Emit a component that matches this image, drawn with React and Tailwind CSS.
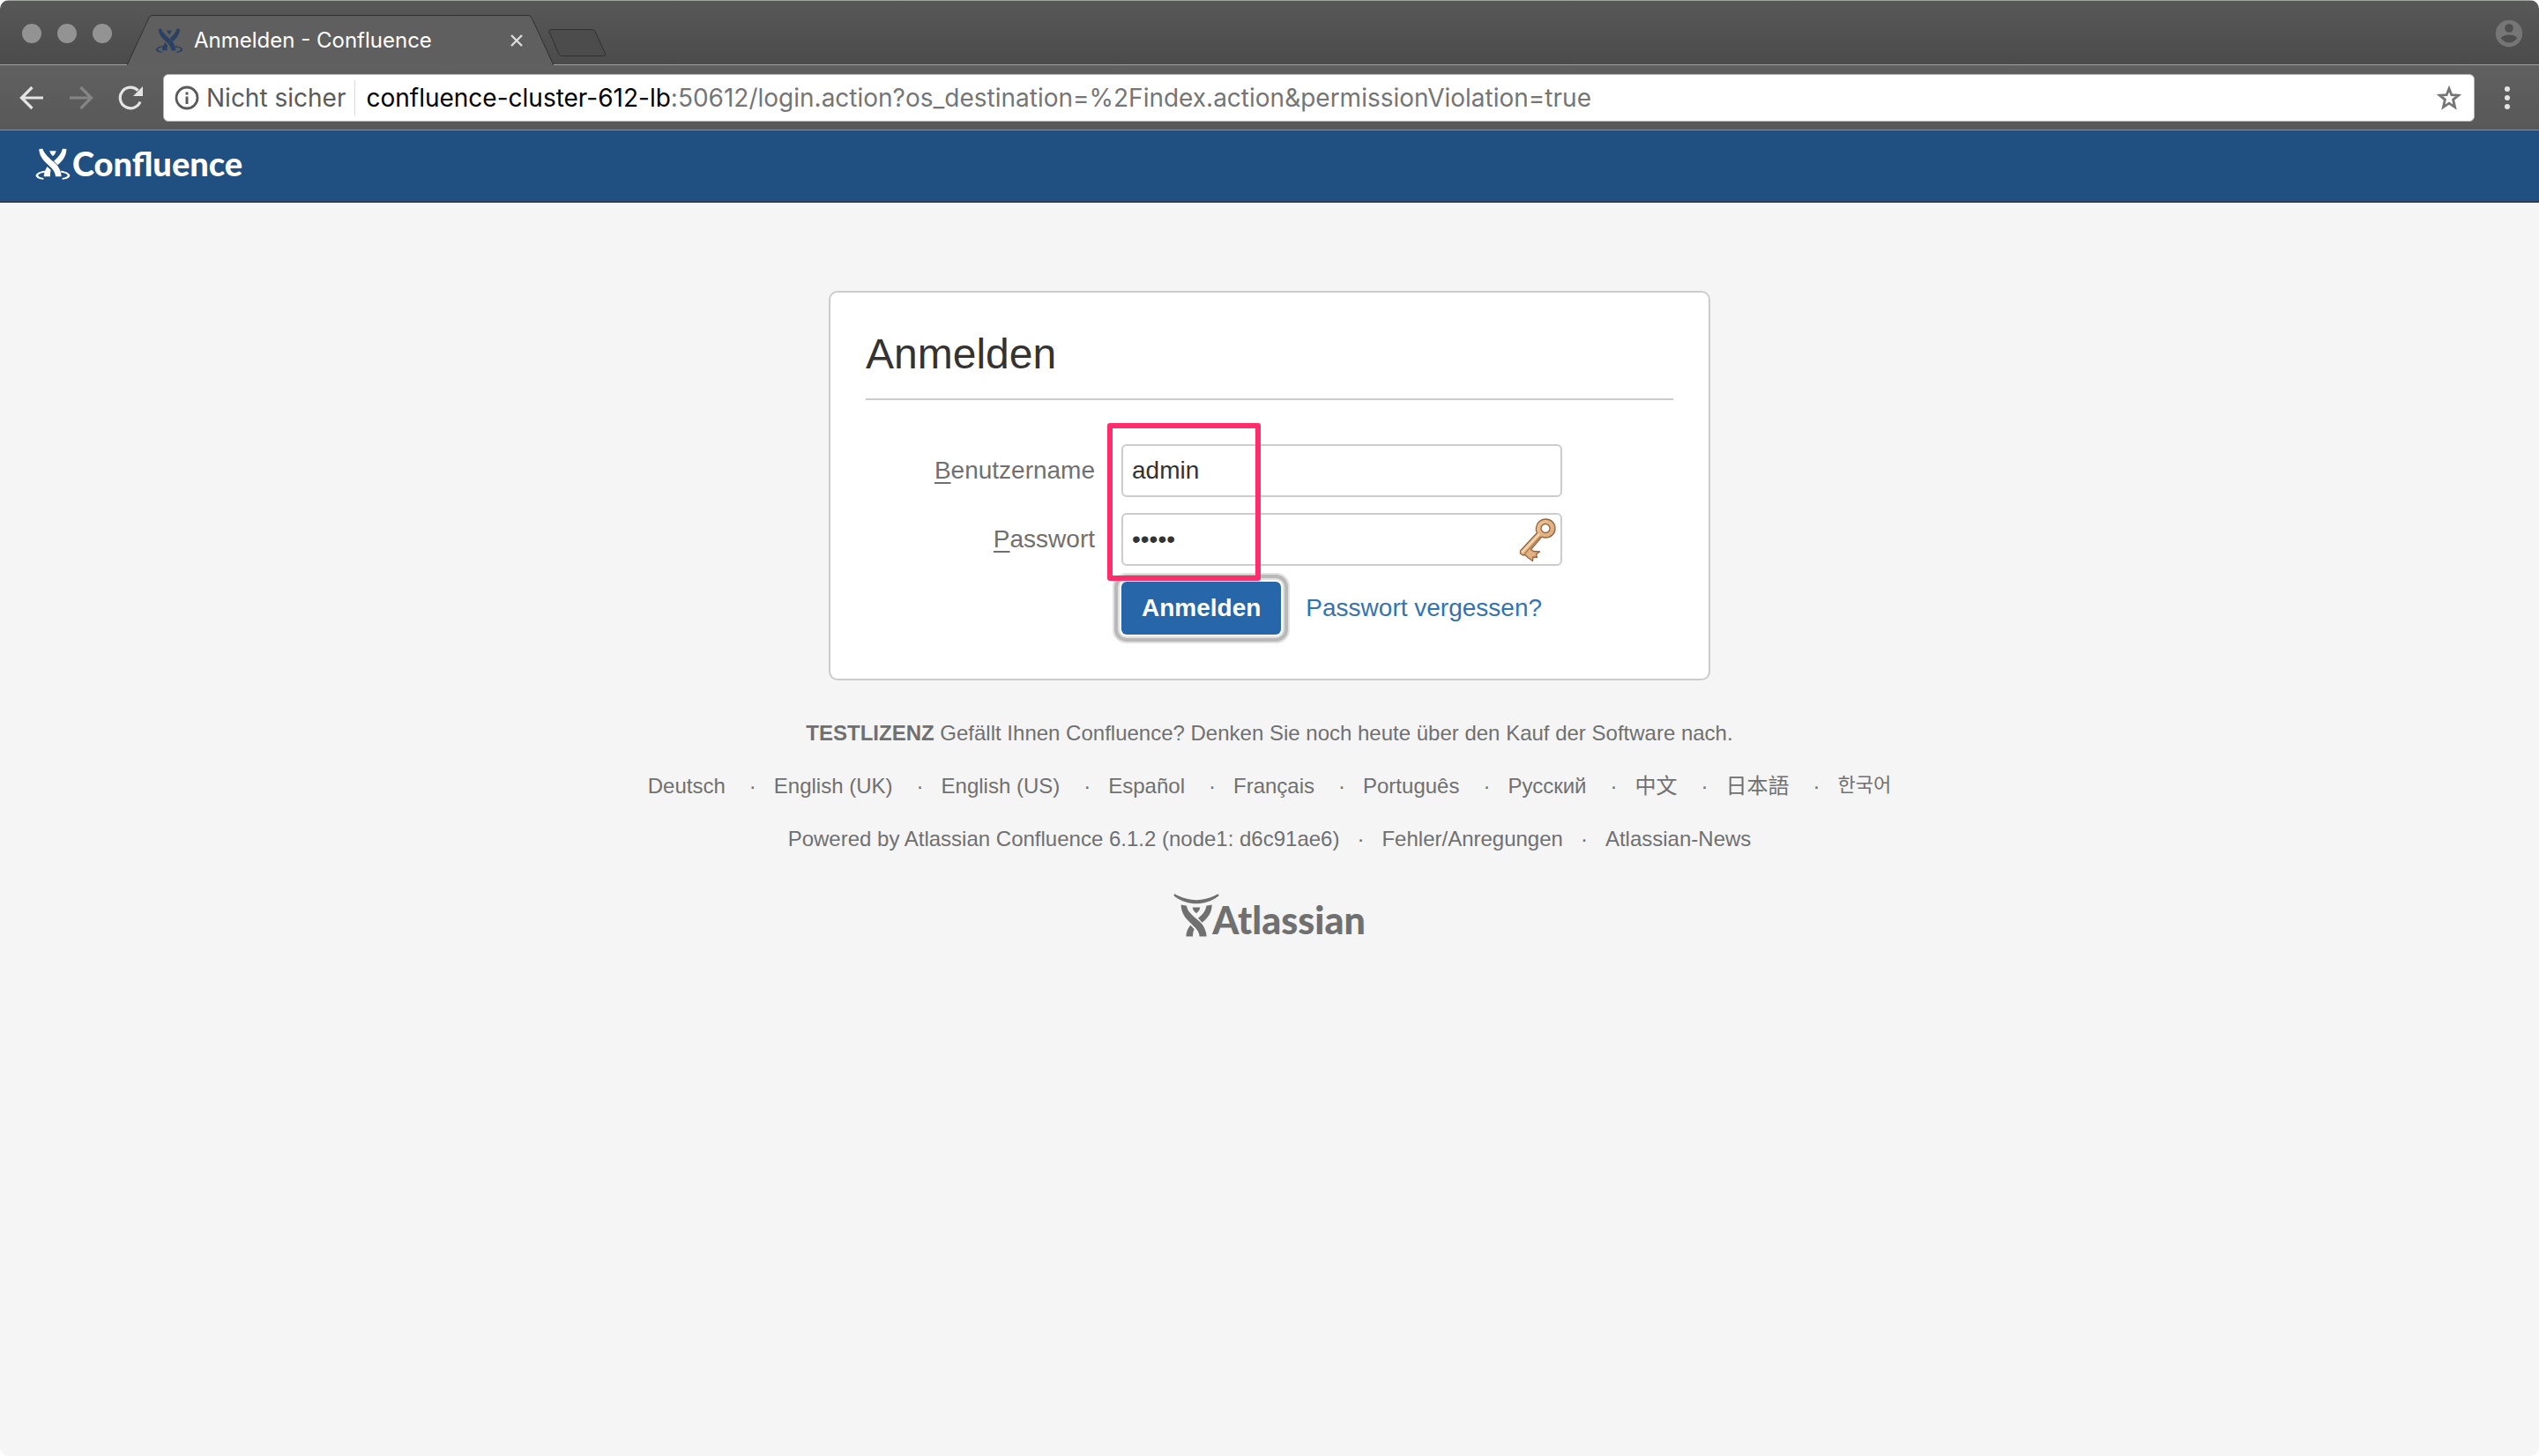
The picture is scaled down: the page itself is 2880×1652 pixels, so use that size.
import React from "react";

function CharlieFigure({ className }) {
  return (
    <svg viewBox="60 54 120 108" className={className} fill="currentColor" aria-hidden="true">
      <path d="M73 57L85 56C92 76 108 88 126 104C142 118 148 134 149 151H129C128 140 124 132 116 123L104 111C86 95 73 80 73 57Z" />
      <path d="M166 57L153 56C148 74 137 86 123 98L136 112C156 95 166 79 166 57Z" />
      <path d="M109 64H131C129 72 125 78 120 81C115 78 111 72 109 64Z" />
      <path d="M101 117L113 129C111 136 111 143 111 151H89C90 138 94 126 101 117Z" />
      <path d="M94 131C72 133 60 142 62 149C64 156 76 160 88 161V156C78 155 70 151 70 147C70 142 80 138 92 137Z" />
      <path d="M146 131C168 133 180 142 178 149C176 156 164 160 152 161V156C162 155 170 151 170 147C170 142 160 138 148 137Z" />
    </svg>
  );
}

function AtlassianFigure({ className }) {
  return (
    <svg viewBox="88 70 156 146" className={className} fill="currentColor" aria-hidden="true">
      <path d="M90 72C92 70 96 71 98 73C140 97 192 97 234 73C236 71 240 70 242 72C243 75 242 78 239 79C195 111 137 111 93 79C90 78 89 75 90 72Z" />
      <path d="M114 107L133 111C136 130 150 142 174 162C191 176 199 194 201 215H177C175 201 170 192 158 181L144 167C126 150 114 132 114 107Z" />
      <path d="M219 107L200 111C198 128 188 140 172 153L186 168C208 149 219 132 219 107Z" />
      <path d="M153 116H179C178 124 173 131 166 136C159 131 154 124 153 116Z" />
      <path d="M146 177L159 190C155 198 154 206 154 215H131C132 200 137 188 146 177Z" />
    </svg>
  );
}

function KeyIcon() {
  return (
    <svg viewBox="0 0 44 52" className="pointer-events-none absolute right-1.5 top-1 h-[52px] w-[44px]" aria-hidden="true">
      <defs>
        <linearGradient id="brass" x1="0" y1="0" x2="1" y2="1">
          <stop offset="0" stopColor="#f3d0a0" />
          <stop offset="1" stopColor="#d59a68" />
        </linearGradient>
      </defs>
      <path
        fill="url(#brass)"
        stroke="#946442"
        strokeWidth="1.300"
        strokeLinejoin="round"
        fillRule="evenodd"
        d="M31 3C37.500 3 42 7.500 42 13.500C42 19.500 37.500 24 31 24C29.500 24 28 23.700 26.800 23.200L14.500 37.500L17.500 39.500L24.500 40L20.500 43L21.500 46.500L17 46L16.500 50.500L11 46.500L8 43.500L5.500 44L2.500 42V39L21.500 18.500C20.500 16.800 20 15 20.500 12.500C21 7 25.500 3 31 3ZM31 8.500A5 5 0 1 0 31 18.500A5 5 0 1 0 31 8.500Z"
      />
      <path d="M4.500 40.500L24 20" stroke="#fbe3bd" strokeWidth="1.500" fill="none" />
      <path d="M7.500 42.500L25.500 22.500" stroke="#b57d52" strokeWidth="1.500" fill="none" />
    </svg>
  );
}

function TitleBar() {
  return (
    <div className="flex h-[74px] items-end border-b border-t border-b-[#a0a0a0] border-t-[#a3a5a3] bg-linear-to-b from-[#585858] to-[#4b4b4b]">
      <div className="flex w-[144px] shrink-0 gap-[18px] self-center pl-[25px] pt-0.5">
        <button aria-label="Schließen" className="size-[22px] rounded-full bg-[#939393]" />
        <button aria-label="Minimieren" className="size-[22px] rounded-full bg-[#939393]" />
        <button aria-label="Maximieren" className="size-[22px] rounded-full bg-[#939393]" />
      </div>
      <div className="relative -mb-px flex h-[57px] w-[484px] shrink-0 items-center pl-8 pr-[35px]">
        <svg viewBox="0 0 484 57" className="absolute inset-0 size-full" aria-hidden="true">
          <path d="M0 57L25 3Q26 .5 29 .5H455Q458 .5 459 3L484 57Z" fill="#5f5f5f" />
          <path d="M0 57L25 3Q26 .5 29 .5H455Q458 .5 459 3L484 57" fill="none" stroke="#303030" />
        </svg>
        <CharlieFigure className="relative h-7 w-8 text-[#2b4062]" />
        <span className="relative ml-3 grow whitespace-nowrap text-[24px] leading-8 text-white">Anmelden - Confluence</span>
        <button aria-label="Tab schließen" className="relative text-[#dcdcdc]">
          <svg viewBox="0 0 14 14" className="size-[14px]" stroke="currentColor" strokeWidth="2.400">
            <path d="M1 1L13 13M13 1L1 13" />
          </svg>
        </button>
      </div>
      <button aria-label="Neuer Tab" className="-ml-1.5 mb-2">
        <svg viewBox="0 0 66 32" className="h-8 w-[66px]" fill="#4c4c4c" stroke="#303030">
          <path d="M3 .5H50Q52 .5 53 2.500L64.500 28Q65 30.500 63 30.500H16Q13 30.500 12 28.500L.8 3Q.5 .5 3 .5Z" />
        </svg>
      </button>
      <button aria-label="Profil" className="ml-auto mr-[18px] self-center pt-0.5 text-[#767676]">
        <svg viewBox="0 0 32 32" className="size-8">
          <circle cx="16" cy="16" r="15.200" fill="currentColor" />
          <circle cx="16" cy="10" r="4.800" fill="#4f4f4f" />
          <path d="M6.500 21C9 18.500 12 17.500 16 17.500S23 18.500 25.500 21C23 24.500 20 26.500 16 26.500S9 24.500 6.500 21Z" fill="#4f4f4f" />
        </svg>
      </button>
    </div>
  );
}

function Toolbar() {
  return (
    <div className="flex h-[74px] items-center border-b border-b-[#8c8c8c] bg-linear-to-b from-[#606060] to-[#585858]">
      <div className="flex w-[185px] shrink-0 items-center gap-7 pl-[22px] text-[#e4e4e4]">
        <button aria-label="Zurück">
          <svg viewBox="0 0 28 28" className="size-7" fill="none" stroke="currentColor" strokeWidth="3.200">
            <path d="M27 14H3M14.500 2L2.500 14L14.500 26" />
          </svg>
        </button>
        <button aria-label="Vorwärts" className="text-[#858585]">
          <svg viewBox="0 0 28 28" className="size-7" fill="none" stroke="currentColor" strokeWidth="3.200">
            <path d="M1 14H25M13.500 2L25.500 14L13.500 26" />
          </svg>
        </button>
        <button aria-label="Neu laden">
          <svg viewBox="0 0 28 28" className="size-7">
            <path d="M25 18.500A11.800 11.800 0 1 1 22.500 5.700" fill="none" stroke="currentColor" strokeWidth="3.200" />
            <path d="M28 1V12H17Z" fill="currentColor" />
          </svg>
        </button>
      </div>
      <div className="flex h-[54px] grow items-center rounded-md border border-[#b5b5b5] bg-white text-[28px] leading-9">
        <button className="ml-3 flex items-center gap-2 text-[#5a5a5a]">
          <svg viewBox="0 0 28 28" className="size-7">
            <circle cx="14" cy="14" r="12" fill="none" stroke="currentColor" strokeWidth="2.800" />
            <path d="M12.500 12.500H15.500V21H12.500ZM12.500 7.500H15.500V10.500H12.500Z" fill="currentColor" />
          </svg>
          Nicht sicher
        </button>
        <span className="ml-2.5 h-10 w-px bg-[#dcdcdc]" />
        <div
          role="textbox"
          aria-label="Adresse"
          contentEditable
          suppressContentEditableWarning
          spellCheck={false}
          className="ml-3 grow whitespace-nowrap text-[#757575]"
        >
          <span className="text-black">confluence-cluster-612-lb</span>:50612/login.action?os_destination=%2Findex.action&amp;permissionViolation=true
        </div>
        <button aria-label="Lesezeichen" className="mr-3.5 text-[#757575]">
          <svg viewBox="0 0 28 28" className="size-7" fill="none" stroke="currentColor" strokeWidth="2.800">
            <path d="M14 3.500L16.800 10.700L24.600 11.200L18.600 16.100L20.600 24.600L14 20.100L7.400 24.600L9.400 16.100L3.400 11.200L11.200 10.700Z" />
          </svg>
        </button>
      </div>
      <button aria-label="Menü" className="flex w-[73px] flex-col items-center gap-1">
        <span className="size-1.5 rounded-full bg-[#e4e4e4]" />
        <span className="size-1.5 rounded-full bg-[#e4e4e4]" />
        <span className="size-1.5 rounded-full bg-[#e4e4e4]" />
      </button>
    </div>
  );
}

function LoginCard() {
  return (
    <section className="mt-[100px] w-[1000px] max-w-full rounded-[10px] border-2 border-[#ccc] bg-white px-10 pb-[50px] pt-10">
      <h1 className="border-b-2 border-[#ccc] pb-5 text-[48px] leading-[60px] text-[#333]">Anmelden</h1>
      <form
        onSubmit={(e) => e.preventDefault()}
        className="relative mt-[50px] grid grid-cols-[260px_500px] items-center gap-x-[30px] gap-y-[18px] text-[28px] leading-9"
      >
        <label htmlFor="user" className="text-right text-[#707070]">
          <u className="underline underline-offset-4">B</u>enutzername
        </label>
        <input
          id="user"
          type="text"
          defaultValue="admin"
          className="h-[60px] w-full rounded-md border-2 border-[#ccc] bg-white px-2.5 text-[#333]"
        />
        <label htmlFor="pass" className="text-right text-[#707070]">
          <u className="underline underline-offset-4">P</u>asswort
        </label>
        <div className="relative">
          <input
            id="pass"
            type="password"
            defaultValue="admin"
            className="block h-[60px] w-full rounded-md border-2 border-[#ccc] bg-white px-2.5 text-[#333]"
          />
          <KeyIcon />
        </div>
        <div className="col-start-2 flex items-center gap-7">
          <button
            type="submit"
            className="h-[60px] rounded-md bg-[#2766a8] px-[23px] font-bold text-white shadow-[0_0_0_2px_#fff,0_0_0_4px_#e0e0e0,0_0_0_8px_#b9b9b9,0_0_0_10px_#e2e2e2]"
          >
            Anmelden
          </button>
          <a href="#forgot" className="text-[#3572b0]">Passwort vergessen?</a>
        </div>
        <div className="pointer-events-none absolute -top-6 left-[274px] h-[179px] w-[174px] rounded-[3px] border-6 border-[#ff2d6c]" />
      </form>
    </section>
  );
}

const languages = ["Deutsch", "English (UK)", "English (US)", "Español", "Français", "Português", "Русский", "中文", "日本語"];
const links = ["Powered by Atlassian Confluence 6.1.2 (node1: d6c91ae6)", "Fehler/Anregungen", "Atlassian-News"];

function Footer() {
  return (
    <footer className="mt-[30px] flex flex-col items-center text-[24px] leading-[60px] text-[#707070]">
      <p>
        <strong>TESTLIZENZ</strong> Gefällt Ihnen Confluence? Denken Sie noch heute über den Kauf der Software nach.
      </p>
      <ul className="flex">
        {languages.map((name) => (
          <li key={name} className="flex">
            <a href="#lang">{name}</a>
            <span className="pl-[27px] pr-5">·</span>
          </li>
        ))}
        <li className="text-[22px] leading-[58px]">
          <a href="#lang" lang="ko">한국어</a>
        </li>
      </ul>
      <ul className="flex">
        {links.map((name, i) => (
          <li key={name} className="flex">
            {i > 0 && <span className="px-5">·</span>}
            <a href="#about">{name}</a>
          </li>
        ))}
      </ul>
      <a href="#atlassian" className="mt-8 flex items-end">
        <AtlassianFigure className="h-[49px] w-[52px]" />
        <span className="-ml-2 h-[47px] font-[Lato,sans-serif] text-[43px] font-black leading-[56px]">Atlassian</span>
      </a>
    </footer>
  );
}

export default function App() {
  return (
    <div className="flex min-h-screen flex-col overflow-hidden rounded-[10px] bg-[#f5f5f5] font-['Liberation_Sans','Noto_Sans_CJK_SC','Noto_Sans_CJK_KR',sans-serif]">
      <div className="font-[Inter,'Liberation_Sans',sans-serif]">
        <TitleBar />
        <Toolbar />
      </div>
      <header className="flex h-[82px] items-center border-b-2 border-[#2e3d54] bg-[#205081] px-10 pb-1 text-white">
        <a href="#home" className="flex items-end">
          <CharlieFigure className="h-9 w-10" />
          <span className="ml-0.5 h-9 font-[Lato,sans-serif] text-[38px] font-black leading-[34px]">Confluence</span>
        </a>
      </header>
      <main className="flex flex-col items-center">
        <LoginCard />
        <Footer />
      </main>
    </div>
  );
}
